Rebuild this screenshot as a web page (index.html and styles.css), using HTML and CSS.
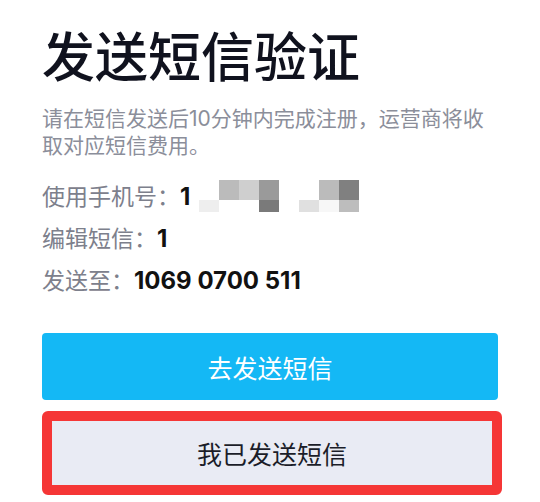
FILE: index.html
```html
<!DOCTYPE html>
<html lang="zh-CN">
<head>
<meta charset="utf-8">
<title>发送短信验证</title>
<link rel="stylesheet" href="styles.css">
</head>
<body>
<main class="page">
  <h1 class="title">发送短信验证</h1>
  <p class="desc">请在短信发送后10分钟内完成注册，运营商将收取对应短信费用。</p>
  <div class="info">
    <div class="row">使用手机号：<b>1</b><svg class="mosaic" width="160" height="32" viewBox="0 0 160 32" aria-hidden="true"><rect x="20" y="0" width="20" height="20" fill="#bbbbbb"/><rect x="40" y="0" width="20" height="20" fill="#cfcfcf"/><rect x="60" y="0" width="20" height="20" fill="#9a9a9a"/><rect x="120" y="0" width="20" height="20" fill="#bbbbbb"/><rect x="140" y="0" width="20" height="20" fill="#808080"/><rect x="0" y="20" width="20" height="12" fill="#eeeeee"/><rect x="60" y="20" width="20" height="12" fill="#7a7a7a"/><rect x="100" y="20" width="20" height="12" fill="#e0e0e0"/><rect x="120" y="20" width="20" height="12" fill="#f7f7f7"/><rect x="140" y="20" width="20" height="12" fill="#bdbdbd"/></svg></div>
    <div class="row">编辑短信：<b>1</b></div>
    <div class="row">发送至：<b>1069 0700 511</b></div>
  </div>
  <button class="btn btn-primary" type="button">去发送短信</button>
  <button class="btn btn-secondary" type="button">我已发送短信</button>
</main>
</body>
</html>
```
FILE: styles.css
```css
html, body {
  margin: 0;
  padding: 0;
  background: #ffffff;
}

body {
  font-family: Inter, "Noto Sans CJK SC", sans-serif;
}

.page {
  padding: 26px 42px 0;
  width: 456px;
}

.title {
  margin: 0;
  font-size: 53px;
  line-height: 64px;
  font-weight: 500;
  color: #10121e;
}

.desc {
  margin: 15px 0 0;
  font-size: 21px;
  line-height: 27px;
  color: #8b8e9a;
}

.info {
  margin-top: 17px;
}

.row {
  font-size: 23px;
  line-height: 42px;
  color: #7d808c;
  white-space: nowrap;
}

.row b {
  color: #111111;
  font-size: 24px;
  font-weight: 700;
}

.mosaic {
  vertical-align: -7px;
  margin-left: 9px;
}

.btn {
  display: flex;
  align-items: center;
  justify-content: center;
  box-sizing: border-box;
  font-family: inherit;
  font-size: 25px;
  padding: 0;
  cursor: pointer;
}

.btn-primary {
  margin-top: 31px;
  width: 456px;
  height: 67px;
  border: none;
  border-radius: 4px;
  background: #14b8f5;
  color: #ffffff;
}

.btn-secondary {
  margin-top: 11px;
  width: 460px;
  height: 84px;
  border: 10px solid #f53636;
  border-radius: 6px;
  background: #e9ebf4;
  color: #1b1d29;
}
```
